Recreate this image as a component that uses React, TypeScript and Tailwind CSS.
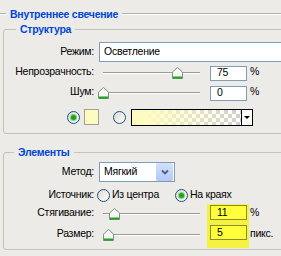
import React from 'react'

const font = { fontFamily: '"Liberation Sans", Arial, sans-serif' }

function Thumb() {
  return (
    <svg width="11" height="12" viewBox="0 0 11 12" className="block">
      <path d="M5.5 0.5 L10.5 5 V11.5 H0.5 V5 Z" fill="#f7f7f4" stroke="#7f8f80" />
      <rect x="1" y="9.5" width="9" height="2" fill="#21a121" />
    </svg>
  )
}

// track starts 9px into the box, thumb center given relative to box
function Slider({ width, at }: { width: number; at: number }) {
  return (
    <div className="relative h-full" style={{ width }}>
      <div className="absolute left-[9px] top-1/2 h-[2px] w-[97px] border-t border-[#9d9b93] bg-white" />
      <div className="absolute top-1/2 -mt-[5px]" style={{ left: at - 5 }}>
        <Thumb />
      </div>
    </div>
  )
}

function Radio({ checked }: { checked?: boolean }) {
  return (
    <div className="flex h-[13px] w-[13px] shrink-0 items-center justify-center rounded-full border border-[#1c5180] bg-[linear-gradient(135deg,#dcd9ce,#ffffff)]">
      {checked && <div className="h-[5px] w-[5px] rounded-full bg-[#21a121] shadow-[0_0_0_1px_#7fd47f]" />}
    </div>
  )
}

function Etched({ className = '' }: { className?: string }) {
  return <div className={'h-[2px] border-t border-[#b4b2a8] bg-white ' + className} />
}

function NumBox({ value, yellow }: { value: string; yellow?: boolean }) {
  return (
    <div
      className={
        'flex h-[15px] w-[37px] items-center pl-[6px] ' +
        (yellow ? 'border border-[#8d8c2c] bg-[#ffff3c]' : 'border border-[#7f9db9] bg-white')
      }
    >
      {value}
    </div>
  )
}

export default function App() {
  return (
    <div
      className="h-[256px] w-[281px] overflow-hidden bg-[#ecebe8] text-[10.5px] tracking-[-0.25px] text-black"
      style={font}
    >
      <div className="w-[300px]">
        {/* header */}
        <div className="flex items-center pt-[7px]">
          <Etched className="w-[6px]" />
          <span className="px-[4px] font-bold leading-[14px] text-[#0046d5]">Внутреннее свечение</span>
          <Etched className="flex-1" />
        </div>

        {/* Структура */}
        <fieldset className="ml-[3px] mt-[1px] rounded-[3px] border border-[#c4c2b7] pb-[8px]">
          <legend className="ml-[12px] px-[4px] font-bold leading-[14px] text-[#0046d5]">Структура</legend>
          <div className="mt-[6px] flex h-[20px] items-center">
            <div className="w-[90px] text-right">Режим:</div>
            <div className="ml-[5px] flex h-[20px] flex-1 items-center border border-[#7f9db9] bg-white pl-[4px]">
              Осветление
            </div>
          </div>
          <div className="flex h-[20px] items-center">
            <div className="w-[90px] text-right">Непрозрачность:</div>
            <div className="h-[20px]">
              <Slider width={116} at={83} />
            </div>
            <div className="pt-[2px]"><NumBox value="75" /></div>
            <span className="ml-[3px]">%</span>
          </div>
          <div className="flex h-[20px] items-center">
            <div className="w-[90px] text-right">Шум:</div>
            <div className="h-[20px]">
              <Slider width={116} at={9} />
            </div>
            <div className="pt-[2px]"><NumBox value="0" /></div>
            <span className="ml-[3px]">%</span>
          </div>
          <div className="ml-[63px] mt-[7px] flex h-[16px] items-center">
            <Radio checked />
            <div className="ml-[4px] h-[16px] w-[15px] border border-[#a3a197] bg-[#fffbc0]" />
            <div className="ml-[14px]"><Radio /></div>
            <div className="ml-[5px] flex h-[17px] w-[122px] border border-black">
              <div className="flex-1 bg-[repeating-conic-gradient(#cfcfcf_0_25%,#ffffff_0_50%)] bg-[length:8px_8px]">
                <div className="h-full w-full bg-[linear-gradient(to_right,#fffbc0,#fffbc0_10%,rgba(255,251,192,0))]" />
              </div>
              <div className="flex w-[11px] items-center justify-center border-l border-black bg-white">
                <div className="h-0 w-0 border-x-[3px] border-t-[3px] border-x-transparent border-t-black" />
              </div>
            </div>
          </div>
        </fieldset>

        {/* Элементы */}
        <fieldset className="ml-[3px] mt-[11px] rounded-[3px] border border-[#c4c2b7] pb-[1px]">
          <legend className="ml-[10px] px-[4px] font-bold leading-[14px] text-[#0046d5]">Элементы</legend>
          <div className="mt-[3px] flex h-[20px] items-center">
            <div className="w-[90px] text-right">Метод:</div>
            <div className="ml-[5px] flex h-[20px] w-[76px] items-center border border-[#7f9db9] bg-white">
              <span className="flex-1 pl-[4px]">Мягкий</span>
              <div className="mr-px flex h-[18px] w-[17px] items-center justify-center rounded-[2px] bg-[linear-gradient(#d3e0fd,#b1c8f7)]">
                <svg width="8" height="6" viewBox="0 0 8 6">
                  <path d="M1 1.5 L4 4.5 L7 1.5" fill="none" stroke="#4d6185" strokeWidth="1.8" />
                </svg>
              </div>
            </div>
          </div>
          <div className="mt-[4px] flex h-[18px] items-center">
            <div className="w-[90px] text-right">Источник:</div>
            <div className="ml-[3px]"><Radio /></div>
            <span className="ml-[2px] w-[63px]">Из центра</span>
            <Radio checked />
            <span className="ml-[2px]">На краях</span>
          </div>
          <div className="flex h-[44px]">
            <div className="flex flex-col gap-[5px] pt-[1px]">
              <div className="flex h-[16px] items-center">
                <div className="w-[90px] text-right">Стягивание:</div>
                <Slider width={113} at={20} />
              </div>
              <div className="flex h-[16px] items-center">
                <div className="w-[90px] text-right">Размер:</div>
                <Slider width={113} at={14} />
              </div>
            </div>
            <div className="flex w-[42px] flex-col gap-[5px] bg-[#f4f142] pl-[3px] pt-[1px]">
              <NumBox value="11" yellow />
              <NumBox value="5" yellow />
            </div>
            <div className="ml-px flex flex-col gap-[5px] pt-[1px]">
              <div className="flex h-[16px] items-center">%</div>
              <div className="flex h-[16px] items-center">пикс.</div>
            </div>
          </div>
        </fieldset>
      </div>
    </div>
  )
}
